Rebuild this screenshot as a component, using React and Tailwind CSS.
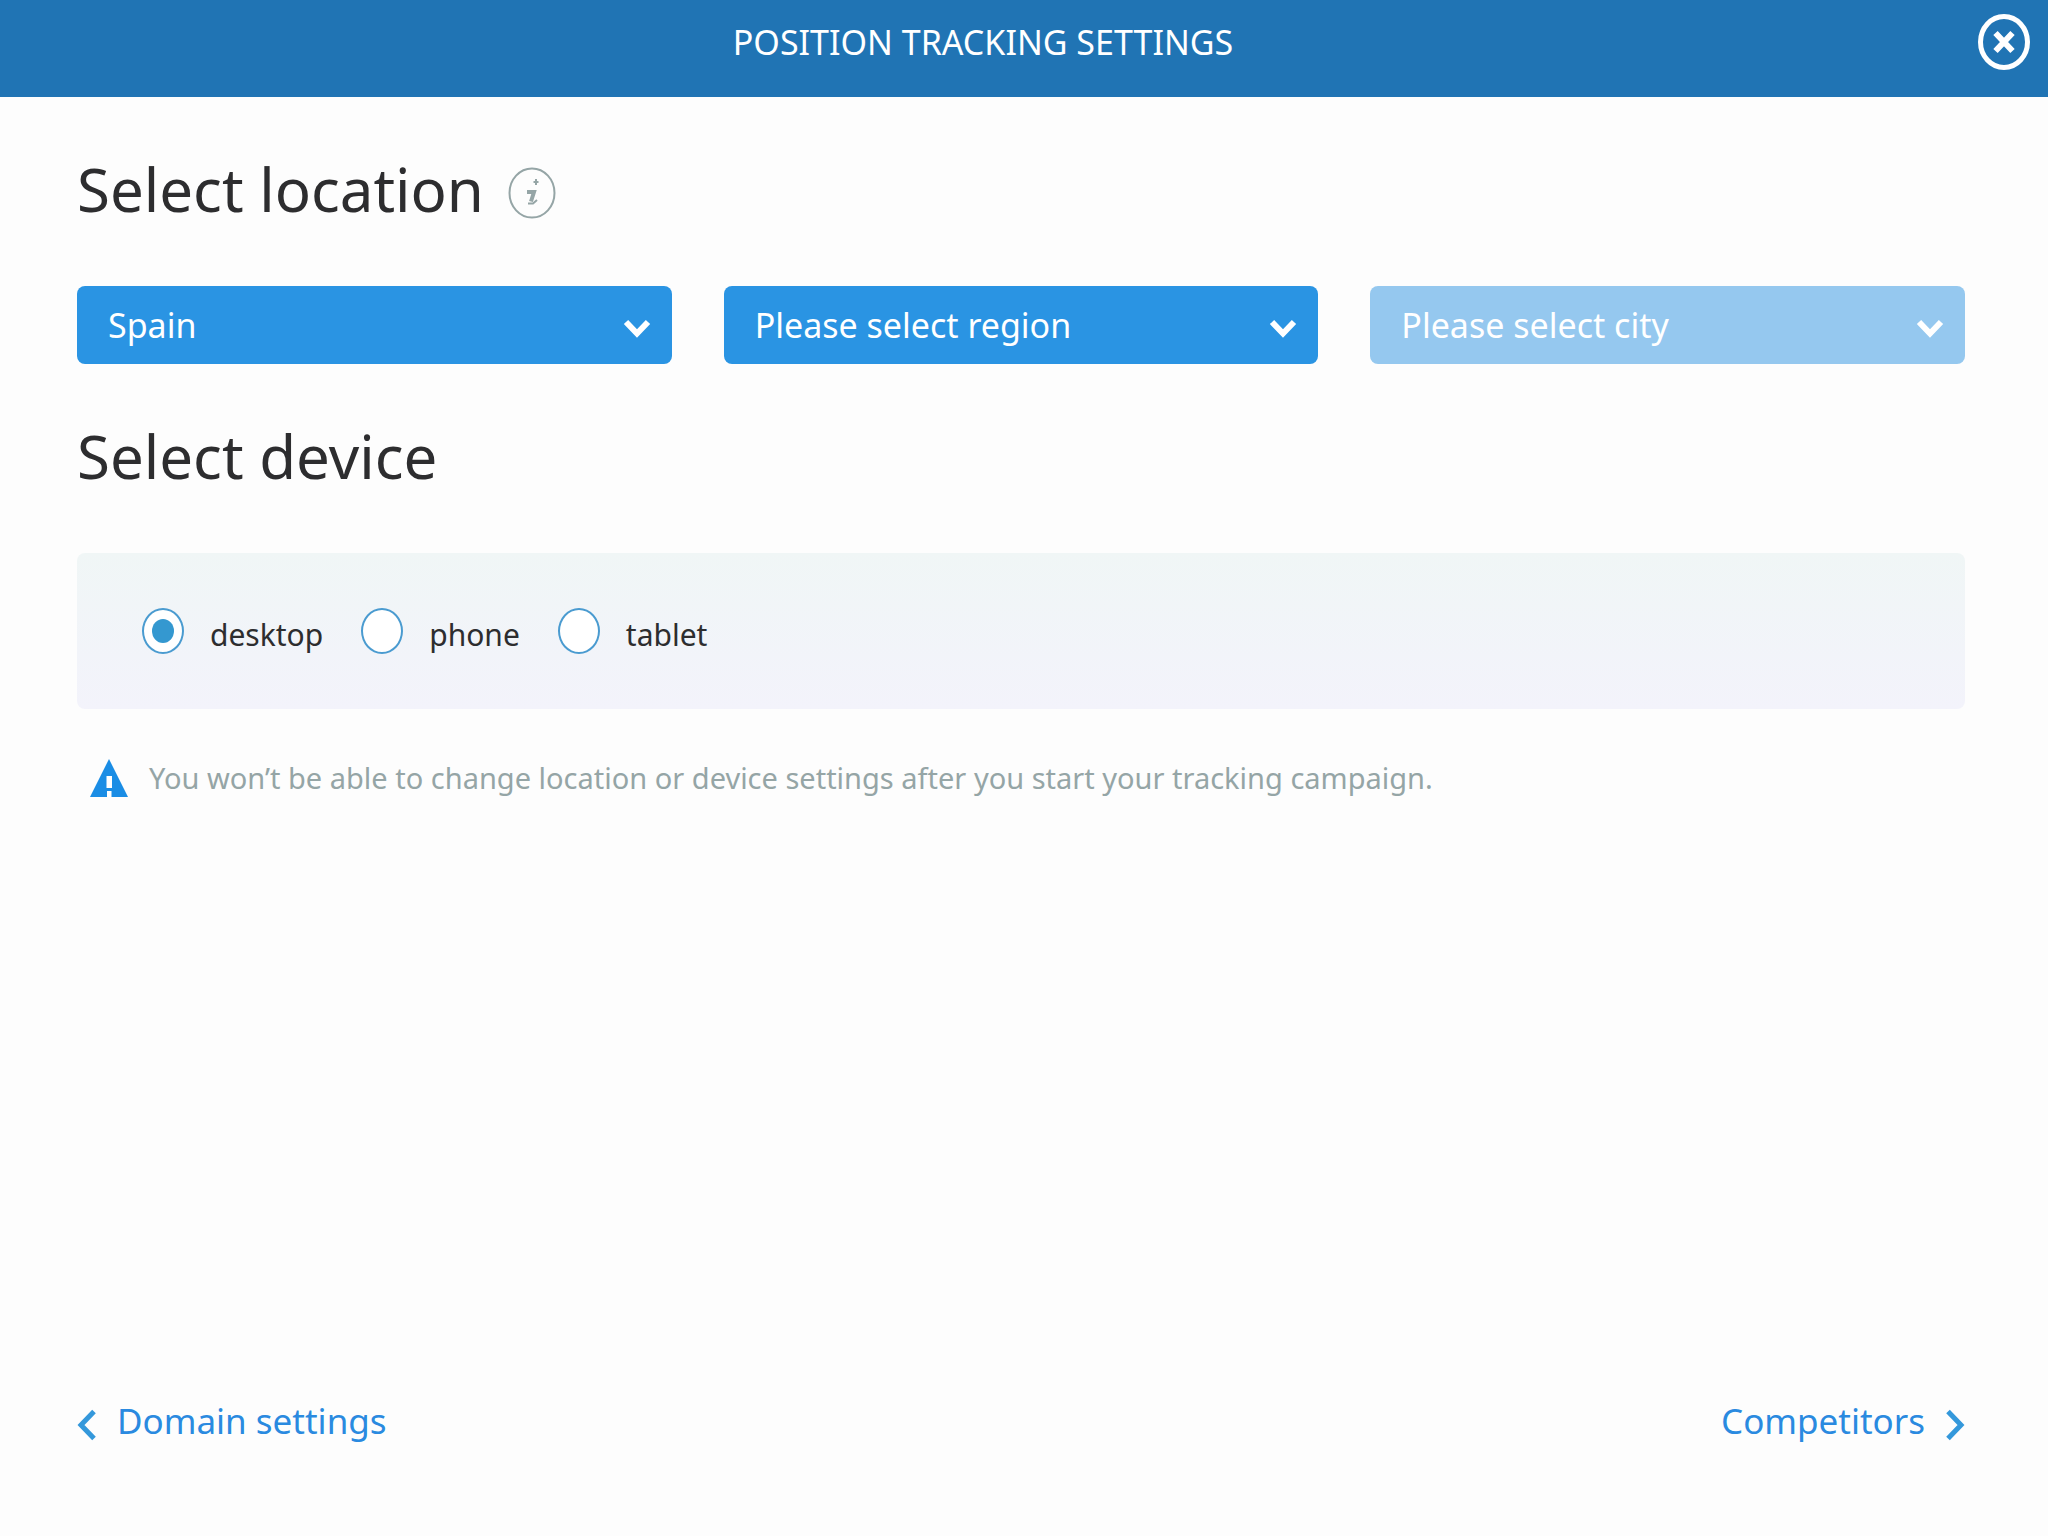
import React, { useState } from 'react';

const devices = ['desktop', 'phone', 'tablet'];

function SelectBox({ id, label, value, options, onChange, disabled }) {
  return (
    <div className="relative">
      <select
        id={id}
        aria-label={label}
        value={value}
        onChange={(e) => onChange(e.target.value)}
        disabled={disabled}
        className="w-full h-[78px] pl-[31px] pr-16 appearance-none rounded-lg bg-[#2a94e3] text-white text-[34px] disabled:bg-[#95c8ef] disabled:opacity-100"
      >
        {options.map((option) => (
          <option key={option} value={option}>
            {option}
          </option>
        ))}
      </select>
      <svg
        className="absolute right-5 top-8 pointer-events-none"
        width={30}
        height={22}
        viewBox="0 0 30 22"
        fill="none"
        aria-hidden="true"
      >
        <path d="M4 4L15 15.500L26 4" stroke="#fff" strokeWidth={6} />
      </svg>
    </div>
  );
}

function App() {
  const [country, setCountry] = useState('Spain');
  const [region, setRegion] = useState('Please select region');
  const [city, setCity] = useState('Please select city');
  const [device, setDevice] = useState('desktop');

  return (
    <div className="min-h-screen flex flex-col bg-[#fdfdfd] text-[#2d2d2f] font-['Noto_Sans',sans-serif]">
      <header className="h-[97px] pb-[14px] pr-[18px] flex items-center bg-[#2074b4] text-white">
        <h1 className="flex-1 text-center text-[34px] leading-[48px]">
          POSITION TRACKING SETTINGS
        </h1>
        <button type="button" aria-label="Close" className="w-16 flex justify-end">
          <svg width={52} height={56} viewBox="0 0 52 56" fill="none">
            <ellipse cx={26} cy={28} rx={23.500} ry={25.500} stroke="#fff" strokeWidth={5} />
            <path d="M17.500 19L34.500 37M34.500 19L17.500 37" stroke="#fff" strokeWidth={6} />
          </svg>
        </button>
      </header>

      <main className="flex-1 flex flex-col pl-[77px] pr-[83px] pt-14">
        <div className="flex items-center gap-6">
          <h2 className="text-[60px] leading-[72px]">Select location</h2>
          <button type="button" aria-label="About location" className="mt-2">
            <svg width={48} height={52} viewBox="0 0 48 52" fill="none">
              <ellipse cx={24} cy={26} rx={22.500} ry={24.500} stroke="#95a5a6" strokeWidth={2} />
              <path d="M28 12V18M25.500 15H30.500" stroke="#95a5a6" strokeWidth={2} />
              <path d="M19 25H26L23 34.500" stroke="#95a5a6" strokeWidth={4} />
              <path d="M20 36.500H25L29 33" stroke="#95a5a6" strokeWidth={2} />
            </svg>
          </button>
        </div>

        <div className="grid grid-cols-3 gap-[52px] mt-[61px]">
          <SelectBox id="country" label="Country" value={country} options={['Spain']} onChange={setCountry} />
          <SelectBox id="region" label="Region" value={region} options={['Please select region']} onChange={setRegion} />
          <SelectBox id="city" label="City" value={city} options={['Please select city']} onChange={setCity} disabled />
        </div>

        <h2 className="mt-14 text-[60px] leading-[72px]">Select device</h2>

        <div
          role="radiogroup"
          aria-label="Device"
          className="mt-[61px] h-[156px] pl-[65px] flex items-center gap-[38px] rounded-lg bg-linear-to-b from-[#f0f6f6] to-[#f3f3fb]"
        >
          {devices.map((name) => (
            <label key={name} className="flex items-center gap-[26px] text-[30px] leading-[44px]">
              <input
                type="radio"
                name="device"
                value={name}
                checked={device === name}
                onChange={() => setDevice(name)}
                className="appearance-none w-[42px] h-[46px] grid place-content-center rounded-[50%] border-2 border-[#4a9bd0] bg-white before:w-[22px] before:h-6 before:rounded-[50%] checked:before:bg-[#3498d0]"
              />
              <span className="pt-2">{name}</span>
            </label>
          ))}
        </div>

        <p className="mt-[47px] pl-3 flex items-center gap-5 text-[#95a5a6] text-[29px] leading-[44px]">
          <svg width={40} height={38} viewBox="0 0 40 38" aria-hidden="true">
            <path d="M20 0L39 38H1Z" fill="#1a8de5" />
            <path d="M17.500 17H23V29H17.500ZM18 32H22.500V38H18Z" fill="#fff" />
          </svg>
          You won’t be able to change location or device settings after you start your tracking campaign.
        </p>
      </main>

      <footer className="flex justify-between pl-[77px] pr-[83px] pb-[91px] text-[#2a8ae0] text-[35px] leading-[48px]">
        <a href="#domain" className="flex items-center gap-5">
          <svg className="mt-2" width={20} height={32} viewBox="0 0 20 32" fill="none" aria-hidden="true">
            <path d="M17 2.500L4 16L17 29.500" stroke="#3498db" strokeWidth={5} />
          </svg>
          Domain settings
        </a>
        <a href="#competitors" className="flex items-center gap-5">
          Competitors
          <svg className="mt-2" width={20} height={32} viewBox="0 0 20 32" fill="none" aria-hidden="true">
            <path d="M3 2.500L16 16L3 29.500" stroke="#3498db" strokeWidth={5} />
          </svg>
        </a>
      </footer>
    </div>
  );
}

export default App;
